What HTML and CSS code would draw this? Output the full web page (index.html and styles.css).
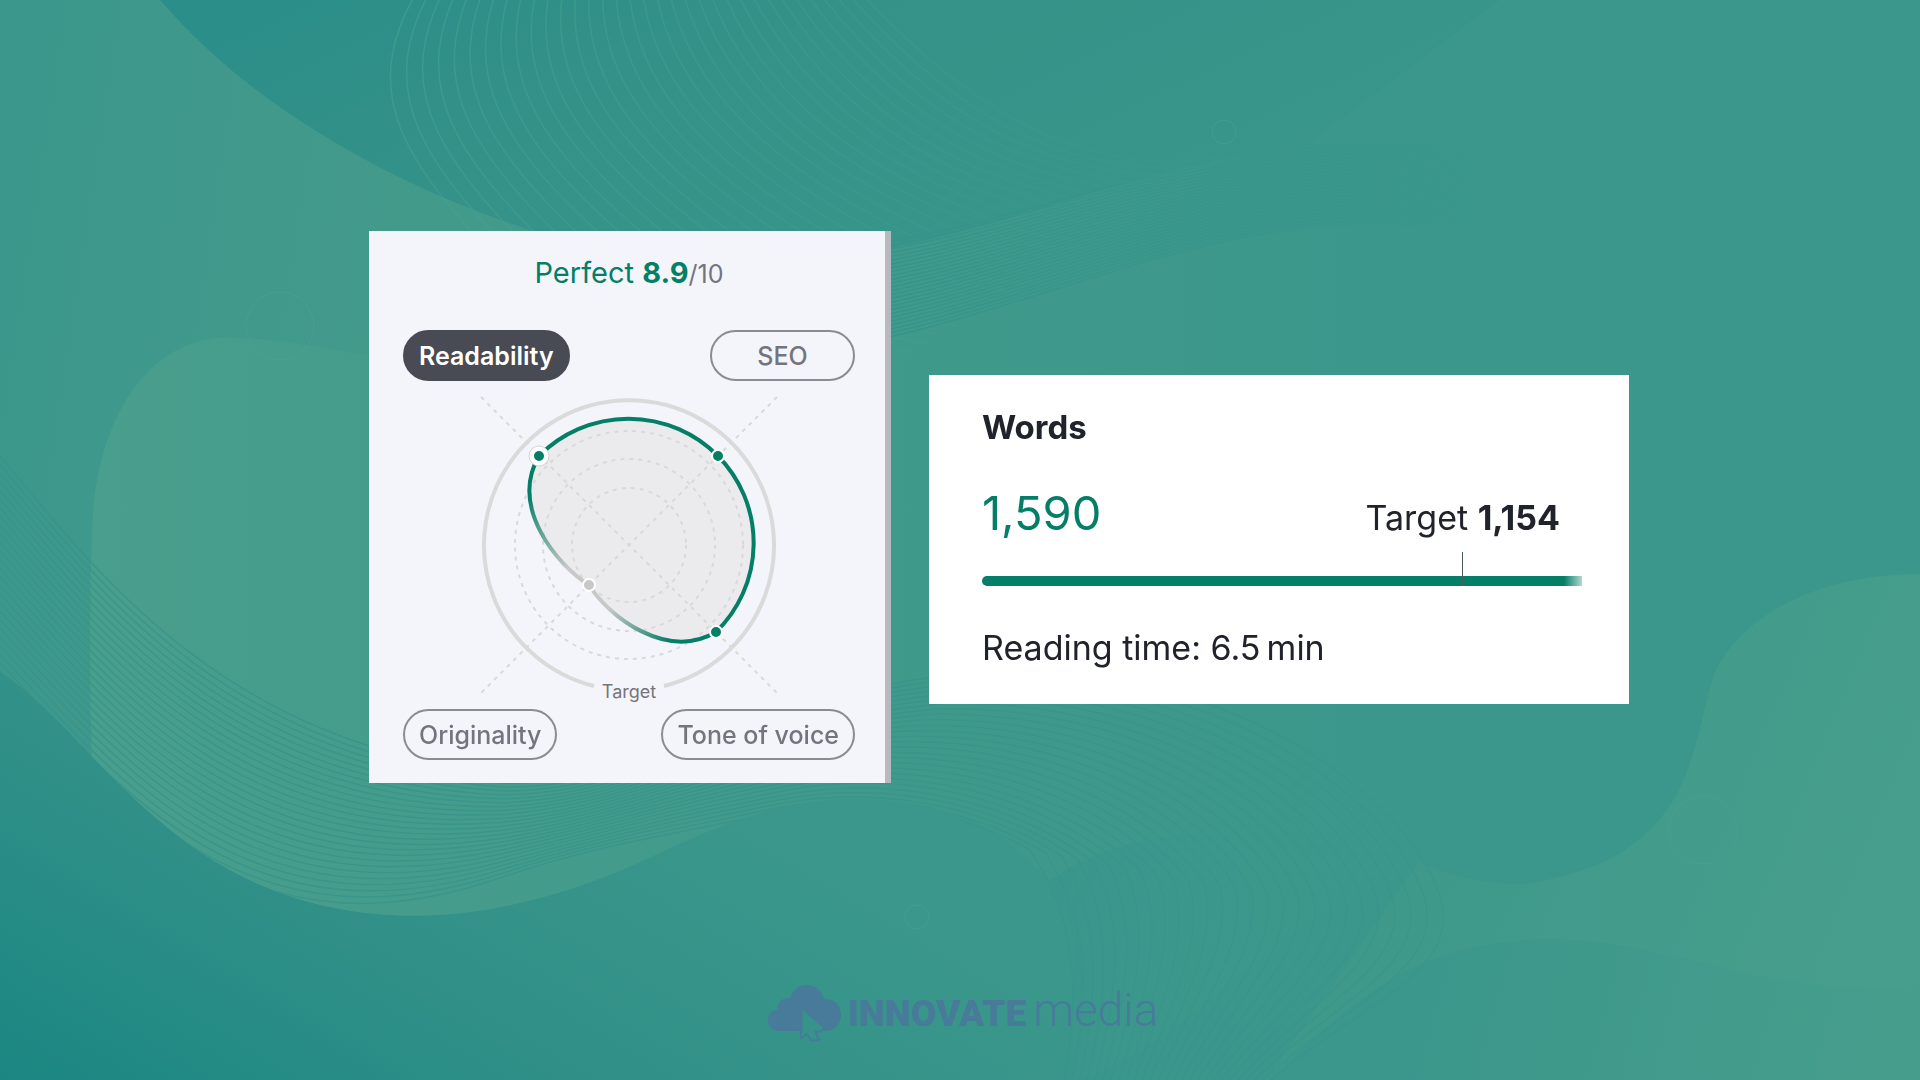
FILE: index.html
```
<!DOCTYPE html>
<html lang="en">
<head>
  <meta charset="UTF-8">
  <meta name="viewport" content="width=device-width, initial-scale=1.0">
  <title>Content score - Innovate Media</title>
  <link rel="stylesheet" href="styles.css">
</head>
<body>
  <!-- Decorative background -->
  <svg class="backdrop" viewBox="0 0 1920 1080" preserveAspectRatio="xMidYMid slice" aria-hidden="true">
    <defs>
      <linearGradient id="base" gradientUnits="userSpaceOnUse" x1="0" y1="1080" x2="310" y2="560">
        <stop offset="0" stop-color="#1b8682"/>
        <stop offset="0.5" stop-color="#309088"/>
        <stop offset="1" stop-color="#3b978b"/>
      </linearGradient>
      <linearGradient id="top" gradientUnits="userSpaceOnUse" x1="220" y1="0" x2="520" y2="640">
        <stop offset="0" stop-color="#2b8e88"/>
        <stop offset="0.4" stop-color="#349288"/>
        <stop offset="1" stop-color="#3b978b"/>
      </linearGradient>
      <linearGradient id="side" gradientUnits="userSpaceOnUse" x1="0" y1="100" x2="1300" y2="300">
        <stop offset="0" stop-color="#3b978b"/>
        <stop offset="0.3" stop-color="#439a8b"/>
        <stop offset="0.7" stop-color="#409a8b"/>
        <stop offset="0.95" stop-color="#3b978b"/>
      </linearGradient>
      <linearGradient id="blob" gradientUnits="userSpaceOnUse" x1="90" y1="0" x2="1420" y2="0">
        <stop offset="0" stop-color="#499e8c"/>
        <stop offset="0.5" stop-color="#419a8b"/>
        <stop offset="1" stop-color="#3b978b"/>
      </linearGradient>
      <linearGradient id="corner" gradientUnits="userSpaceOnUse" x1="1420" y1="800" x2="1900" y2="1000">
        <stop offset="0" stop-color="#3e998b"/>
        <stop offset="1" stop-color="#489e8c"/>
      </linearGradient>
      <linearGradient id="hill" gradientUnits="userSpaceOnUse" x1="1420" y1="960" x2="1860" y2="1080">
        <stop offset="0" stop-color="#3b978b"/>
        <stop offset="1" stop-color="#469d8c"/>
      </linearGradient>
      <linearGradient id="mound" gradientUnits="userSpaceOnUse" x1="1050" y1="900" x2="1270" y2="960">
        <stop offset="0" stop-color="#3a968b"/>
        <stop offset="1" stop-color="#3a968b" stop-opacity="0"/>
      </linearGradient>
      <linearGradient id="lightLine" gradientUnits="userSpaceOnUse" x1="400" y1="0" x2="1130" y2="200">
        <stop offset="0" stop-color="#48a08f" stop-opacity="0.6"/>
        <stop offset="1" stop-color="#48a08f" stop-opacity="0.1"/>
      </linearGradient>
      <linearGradient id="darkLine" gradientUnits="userSpaceOnUse" x1="880" y1="0" x2="1620" y2="0">
        <stop offset="0" stop-color="#34938a" stop-opacity="0.9"/>
        <stop offset="1" stop-color="#34938a" stop-opacity="0"/>
      </linearGradient>
      <linearGradient id="waveLine" gradientUnits="userSpaceOnUse" x1="0" y1="0" x2="1440" y2="0">
        <stop offset="0" stop-color="#35938a" stop-opacity="0.8"/>
        <stop offset="1" stop-color="#35938a" stop-opacity="0.55"/>
      </linearGradient>
      <path id="sideShape" d="M0 0H160C250 105 390 185 533 231H891C980 232 1150 160 1300 150V700L960 815C830 775 740 815 640 862C500 925 340 945 200 852C110 790 60 710 0 672Z"/>
      <clipPath id="land">
        <use href="#sideShape"/>
        <rect x="959" width="961" height="1080"/>
      </clipPath>
    </defs>
    <rect width="1920" height="1080" fill="url(#base)"/>
    <use href="#sideShape" fill="url(#side)"/>
    <path fill="url(#top)" d="M160 0C250 105 390 185 533 231L720 262C800 268 890 250 960 232C1080 200 1180 158 1300 150L1500 0Z"/>
    <g clip-path="url(#land)">
      <path fill="url(#blob)" d="M110 1000C88 800 88 640 92 540C92 420 150 330 239 338C290 340 330 350 369 356L891 345C1050 300 1180 227 1380 227H1416V876C1300 890 1150 1080 1070 1080C1105 1000 1090 930 1049 881C1020 850 990 825 959 815V1080Z"/>
    </g>
    <path fill="url(#corner)" d="M1920 574C1800 574 1730 630 1713 678C1690 750 1695 860 1523 884C1480 884 1450 876 1419 862L1266 1080H1920Z"/>
    <path fill="url(#hill)" d="M1266 1080C1350 1010 1400 942 1548 939C1680 940 1760 1000 1920 984V1080Z"/>
    <path fill="url(#mound)" d="M1049 881C1100 845 1160 833 1229 833L1300 1080H1009C1080 1020 1095 950 1049 881Z"/>
    <g class="lines lines-light" data-count="34"
       data-from="430 -30 350 90 390 160 560 320 700 420 740 430 760 440"
       data-to="840 -30 920 60 1020 150 1144 160 1180 164 1220 160 1260 150"></g>
    <g clip-path="url(#land)">
      <g class="lines lines-dark" data-count="26"
         data-from="820 250 960 240 1060 190 1240 160 1330 140 1450 130 1560 180"
         data-to="820 350 960 330 1090 270 1240 238 1370 210 1500 220 1640 290"></g>
      <g class="lines lines-wave" data-count="27"
         data-from="0 456 110 590 230 740 500 775 640 785 740 690 1000 670 1300 670 1460 860 1442 930 1430 990 1330 1020 1250 1100"
         data-to="0 680 140 830 260 960 500 878 600 843 680 834 760 815 860 792 960 810 1030 850 1062 900 1090 960 1060 1100"></g>
    </g>
    <g class="rings">
      <circle cx="280" cy="326" r="34"/>
      <circle cx="1224" cy="132" r="12"/>
      <circle cx="917" cy="917" r="12"/>
      <circle cx="1703" cy="830" r="34"/>
    </g>
  </svg>

  <main class="panels">
    <!-- Overall score -->
    <section class="score-card">
      <p class="score-title">Perfect <strong>8.9</strong><span class="score-max">/10</span></p>
      <div class="tag-row">
        <button type="button" class="tag tag-active">Readability</button>
        <button type="button" class="tag tag-wide">SEO</button>
      </div>
      <svg class="radar" viewBox="-226 -164 452 328" role="img" aria-label="Score chart">
        <defs>
          <linearGradient id="fadeLeft" gradientUnits="userSpaceOnUse" x1="-98" y1="-50" x2="-65" y2="25">
            <stop offset="0" stop-color="#047e66"/>
            <stop offset="1" stop-color="#c8c8c8"/>
          </linearGradient>
          <linearGradient id="fadeBottom" gradientUnits="userSpaceOnUse" x1="42" y1="90" x2="-22" y2="68">
            <stop offset="0" stop-color="#047e66"/>
            <stop offset="1" stop-color="#c8c8c8"/>
          </linearGradient>
        </defs>
        <path class="radar-area" d="M-90 -89A126 126 0 0 1 89 -89A124 124 0 0 1 87 87C38 116 -20 72 -40 40C-72 20 -120 -38 -90 -89Z"/>
        <g class="radar-grid">
          <circle r="57"/>
          <circle r="86"/>
          <circle r="114"/>
          <path d="M-148 -148L148 148M148 -148L-148 148"/>
        </g>
        <path class="radar-target" d="M-35 141A145 145 0 1 1 35 141"/>
        <path class="radar-line" d="M-90 -89A126 126 0 0 1 89 -89A124 124 0 0 1 87 87"/>
        <path class="radar-line" stroke="url(#fadeBottom)" d="M87 87C38 116 -20 72 -40 40"/>
        <path class="radar-line" stroke="url(#fadeLeft)" d="M-90 -89C-120 -38 -72 20 -40 40"/>
        <circle class="radar-halo" cx="-90" cy="-89" r="10"/>
        <circle class="radar-dot" cx="-90" cy="-89" r="6"/>
        <circle class="radar-dot" cx="89" cy="-89" r="6"/>
        <circle class="radar-dot" cx="87" cy="87" r="6"/>
        <circle class="radar-dot radar-dot-low" cx="-40" cy="40" r="6"/>
        <text class="radar-label" x="0" y="153">Target</text>
      </svg>
      <div class="tag-row">
        <button type="button" class="tag">Originality</button>
        <button type="button" class="tag">Tone of voice</button>
      </div>
    </section>

    <!-- Word count -->
    <section class="words-card">
      <h2 class="words-title">Words</h2>
      <div class="words-stats">
        <span class="words-count">1,590</span>
        <span class="words-target">Target <strong>1,154</strong></span>
      </div>
      <div class="words-bar"><span class="words-tick"></span></div>
      <p class="words-time">Reading time: 6.5&#8201;min</p>
    </section>
  </main>

  <footer class="brand">
    <svg class="brand-icon" viewBox="0 0 73 57" aria-hidden="true">
      <path fill="currentColor" d="M11 46C4 46 0 41 0 35.500C0 29 4 25 9.500 25C9 18 14 12 22 13C25 4 31 0 39 0C48 0 54 6 56 14.500C65 13 73 20 73 30C73 39 67 46 56 46L52.500 46L55 43L34.500 25V46Z"/>
      <path fill="none" stroke="currentColor" stroke-width="2" stroke-linejoin="round" d="M33 45V53.500L39 49L43 55.500L51.500 55.500L47 46.500H54"/>
    </svg>
    <span class="brand-strong">INNOVATE</span>
    <span class="brand-light">media</span>
  </footer>

  <script>
    // Draw each line family by blending between its first and last curve
    document.querySelectorAll('.lines').forEach(function(group) {
      const from = group.dataset.from.split(' ').map(Number);
      const to = group.dataset.to.split(' ').map(Number);
      const count = Number(group.dataset.count);

      for (let i = 0; i < count; i++) {
        const t = i / (count - 1);
        const p = from.map((value, n) => (value + (to[n] - value) * t).toFixed(1));
        const path = document.createElementNS('http://www.w3.org/2000/svg', 'path');
        path.setAttribute('d', 'M' + p.slice(0, 2).join(' ') + 'C' + p.slice(2).join(' '));
        group.appendChild(path);
      }
    });
  </script>
</body>
</html>
```
FILE: styles.css
```
* {
  box-sizing: border-box;
}

body {
  margin: 0;
  min-height: 100vh;
  display: flex;
  flex-direction: column;
  justify-content: space-between;
  background-color: #3b978b;
  font-family: Inter, "Liberation Sans", sans-serif;
  color: #20222c;
}

p, h2 {
  margin: 0;
}

/* Background */
.backdrop {
  position: fixed;
  inset: 0;
  width: 100%;
  height: 100%;
  z-index: -1;
}

.lines {
  fill: none;
  stroke-width: 1.5;
}

.lines-light {
  stroke: url(#lightLine);
}

.lines-dark {
  stroke: url(#darkLine);
}

.lines-wave {
  stroke: url(#waveLine);
}

.rings {
  fill: none;
  stroke: #4aa392;
  stroke-opacity: 0.5;
}

/* Cards */
.panels {
  display: flex;
  justify-content: center;
  align-items: flex-start;
  gap: 38px;
  padding: 231px 0 0 78px;
}

.score-card {
  flex: 0 1 522px;
  padding: 25px 30px 23px 34px;
  background-color: #f4f5fa;
  border-right: 6px solid #b6b9be;
}

.score-title {
  margin-bottom: 40px;
  font-size: 29px;
  line-height: 34px;
  text-align: center;
  color: #047e66;
}

.score-max {
  font-size: 25px;
  line-height: 24px;
  color: #74747f;
}

.tag-row {
  display: flex;
  justify-content: space-between;
}

.tag {
  height: 51px;
  padding: 0 14px;
  border: 2px solid #8b8b96;
  border-radius: 26px;
  background: none;
  font-family: inherit;
  font-size: 25px;
  font-weight: 500;
  color: #74747f;
  cursor: pointer;
}

.tag-wide {
  min-width: 145px;
}

.tag-active {
  background-color: #484a54;
  border-color: #484a54;
  font-weight: 600;
  color: #fff;
}

/* Radar chart */
.radar {
  display: block;
  width: 100%;
}

.radar-area {
  fill: #ebebed;
}

.radar-grid {
  fill: none;
  stroke: #d9d9dc;
  stroke-width: 2;
  stroke-dasharray: 4 5;
}

.radar-target {
  fill: none;
  stroke: #d9dada;
  stroke-width: 4;
}

.radar-line {
  fill: none;
  stroke-width: 4;
}

.radar-line:not([stroke]) {
  stroke: #047e66;
}

.radar-halo {
  fill: #fff;
  stroke: #d4d4d6;
  stroke-width: 1;
}

.radar-dot {
  fill: #047e66;
  stroke: #fff;
  stroke-width: 2;
}

.radar-dot-low {
  fill: #c8c8c8;
}

.radar-label {
  font-size: 18px;
  text-anchor: middle;
  fill: #74747a;
}

/* Words */
.words-card {
  flex: 0 1 700px;
  margin-top: 144px;
  padding: 32px 47px 36px 53px;
  background-color: #fff;
}

.words-title {
  margin-bottom: 38px;
  font-size: 33px;
  line-height: 40px;
  font-weight: 700;
}

.words-stats {
  display: flex;
  justify-content: space-between;
  align-items: baseline;
  margin-bottom: 35px;
  padding-right: 22px;
}

.words-count {
  font-size: 47px;
  line-height: 56px;
  color: #047e66;
}

.words-target {
  font-size: 34px;
  line-height: 40px;
}

.words-bar {
  position: relative;
  height: 10px;
  margin-bottom: 42px;
  border-radius: 5px 0 0 5px;
  background: linear-gradient(to right, #047e66 97%, #b3d8d1);
}

/* Target mark over the bar */
.words-tick {
  position: absolute;
  left: 80%;
  bottom: 0;
  width: 1px;
  height: 34px;
  background-color: #4c5a5a;
}

.words-time {
  font-size: 34px;
  line-height: 40px;
}

/* Brand */
.brand {
  display: flex;
  justify-content: center;
  align-items: baseline;
  gap: 7px;
  padding: 0 0 38px 6px;
  line-height: 56px;
  color: #487a9a;
}

.brand-icon {
  width: 73px;
  height: 57px;
  align-self: flex-end;
}

.brand-strong {
  font-family: Roboto, sans-serif;
  font-size: 37px;
  font-weight: 900;
}

.brand-light {
  font-family: Roboto, sans-serif;
  font-size: 46px;
  font-weight: 300;
}
```
